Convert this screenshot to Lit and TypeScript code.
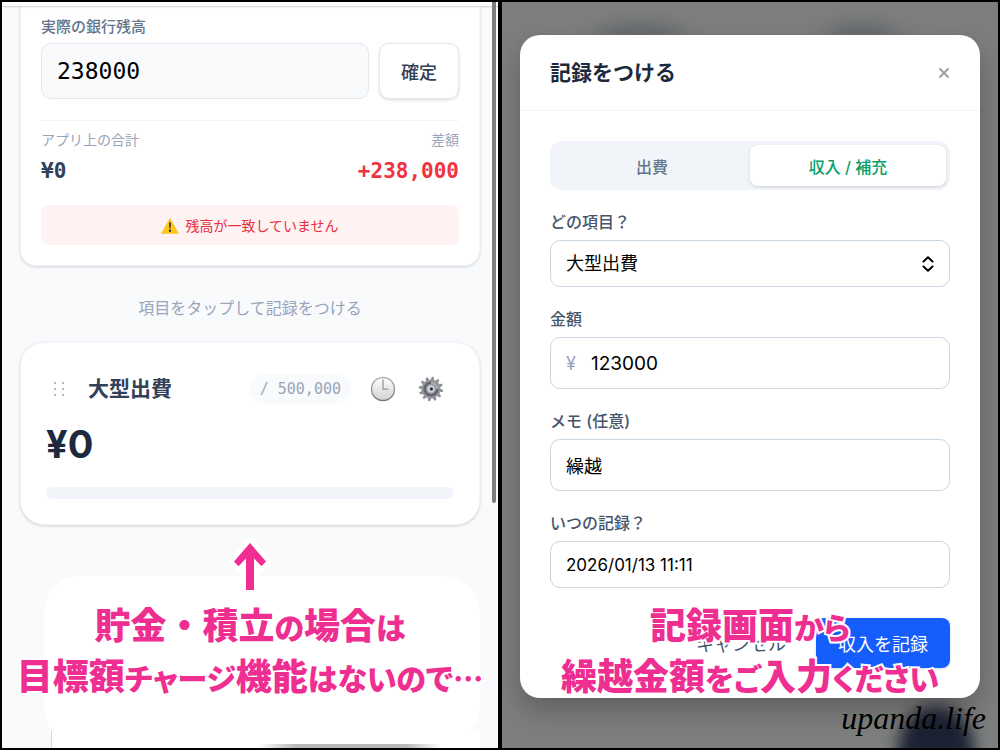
import { LitElement, html, css, svg } from "lit";
import { customElement } from "lit/decorators.js";

const fontStack = css`Inter, "Noto Sans CJK JP", sans-serif`;

const gearTeeth = Array.from({ length: 12 }, (_, i) => i * 30);

@customElement("balance-panel")
export class BalancePanel extends LitElement {
  static styles = css`
    :host {
      display: block;
      position: relative;
      overflow: hidden;
      background: #f8fafc;
      font-family: ${fontStack};
      color: #314158;
    }
    * { box-sizing: border-box; }
    button { font: inherit; color: inherit; cursor: pointer; padding: 0; border: 0; background: none; }
    .strip { height: 4px; background: #fff; box-shadow: 0 1px 2px #0000002e; position: relative; }
    .page { padding: 0 18px; }
    .card {
      background: #fff;
      border: 1px solid #f1f5f9;
      box-shadow: 0 1px 3px #0000002b;
    }
    .balance { padding: 11px 20px 20px; border-top: 0; border-radius: 0 0 16px 16px; }
    .label { display: block; font-size: 15px; line-height: 20px; font-weight: 500; color: #64748b; }
    .entry { display: flex; gap: 10px; margin-top: 6px; }
    .mono { font-family: "DejaVu Sans Mono", "Liberation Mono", monospace; }
    .entry input {
      flex: 1;
      min-width: 0;
      height: 56px;
      padding: 0 15px;
      border: 1px solid #e2e8f0;
      border-radius: 10px;
      background: #f8fafc;
      color: #000;
      font-size: 23px;
    }
    .confirm {
      width: 80px;
      height: 56px;
      border: 1px solid #e2e8f0;
      border-radius: 10px;
      background: #fff;
      box-shadow: 0 1px 3px #00000026;
      font-size: 18px;
      font-weight: 500;
    }
    .totals {
      display: flex;
      justify-content: space-between;
      margin: 21px 0 0;
      padding-top: 9px;
      border-top: 1px solid #f1f5f9;
    }
    .totals dt { font-size: 14px; line-height: 20px; color: #99a4b9; }
    .totals dd { margin: 9px 0 0; font-size: 21px; line-height: 24px; font-weight: 700; }
    .diff { text-align: right; }
    .diff dd { color: #ef3340; }
    .alert {
      display: flex;
      align-items: center;
      justify-content: center;
      gap: 6px;
      min-height: 40px;
      margin: 22px 0 0;
      border-radius: 8px;
      background: #fef2f2;
      color: #e7303c;
      font-size: 14px;
    }
    .hint { margin: 30px 0 22px; font-size: 16px; line-height: 24px; text-align: center; color: #99a4bd; }
    .item { padding: 31px 25px 25px; border-radius: 24px; }
    .head { display: flex; align-items: center; gap: 16px; padding-right: 7px; }
    .grip { display: grid; place-items: center; width: 26px; height: 30px; cursor: grab; }
    h2 { flex: 1; margin: 0; font-size: 21px; line-height: 26px; font-weight: 700; white-space: nowrap; }
    .pill {
      padding: 0 10px;
      border-radius: 15px;
      background: #f8fafc;
      color: #9aa6b8;
      font-size: 15px;
      line-height: 30px;
      white-space: pre;
    }
    .tool { display: grid; place-items: center; width: 32px; height: 30px; }
    .amount { margin: 20px 0 23px; font-size: 38px; line-height: 40px; font-weight: 700; color: #1d293d; }
    .bar { height: 12px; border-radius: 6px; background: #f1f5f9; }
    .peek {
      position: absolute;
      left: 49px;
      right: 18px;
      bottom: 0;
      height: 17px;
      border-left: 1px solid #d4d8dc;
      background: #fff;
    }
    .peek-edge {
      position: absolute;
      left: 256px;
      right: 56px;
      bottom: 0;
      height: 4px;
      background: linear-gradient(90deg, #fff, #b9b9b9 20%, #b9b9b9 80%, #fff);
    }
    .mask {
      position: absolute;
      left: 42px;
      right: 18px;
      bottom: 5px;
      height: 167px;
      border-radius: 36px;
      background: #fff;
    }
    .scroll {
      position: absolute;
      top: 0;
      right: 2px;
      width: 4px;
      height: 501px;
      border-radius: 0 0 2px 2px;
      background: #7c7d7e;
    }
    .arrow { position: absolute; left: 50%; bottom: 152px; margin-left: -24px; }
  `;

  render() {
    return html`
      <div class="strip"></div>
      <div class="page">
        <section class="card balance">
          <label class="label" for="bank">実際の銀行残高</label>
          <div class="entry">
            <input id="bank" class="mono" inputmode="numeric" value="238000" />
            <button class="confirm">確定</button>
          </div>
          <dl class="totals">
            <div><dt>アプリ上の合計</dt><dd class="mono">¥0</dd></div>
            <div class="diff"><dt>差額</dt><dd class="mono">+238,000</dd></div>
          </dl>
          <p class="alert" role="status">
            <svg width="18" height="17" viewBox="0 0 18 17" aria-hidden="true">
              <path d="M9 .8 17.6 16a.6.6 0 0 1-.5.8H.9a.6.6 0 0 1-.5-.8Z" fill="#fcc61b" />
              <path d="M8 5.4h2l-.4 6H8.4Z" fill="#35322c" />
              <circle cx="9" cy="13.8" r="1.2" fill="#35322c" />
            </svg>
            <span>残高が一致していません</span>
          </p>
        </section>
        <p class="hint">項目をタップして記録をつける</p>
        <section class="card item">
          <div class="head">
            <button class="grip" aria-label="並べ替え">
              <svg width="12" height="16" viewBox="0 0 12 16" fill="#8e9299">
                ${[2, 8, 14].map((y) => svg`<circle cx="2" cy=${y} r="0.9" /><circle cx="10" cy=${y} r="0.9" />`)}
              </svg>
            </button>
            <h2>大型出費</h2>
            <span class="pill mono">/ 500,000</span>
            <button class="tool" aria-label="履歴">
              <svg width="26" height="26" viewBox="0 0 26 26">
                <defs>
                  <linearGradient id="rim" x1="0" y1="0" x2="0" y2="1">
                    <stop offset="0" stop-color="#b4b4b4" /><stop offset="1" stop-color="#777" />
                  </linearGradient>
                  <linearGradient id="face" x1="0" y1="0" x2="0" y2="1">
                    <stop offset="0" stop-color="#fdfdfd" /><stop offset="1" stop-color="#d2d2d2" />
                  </linearGradient>
                </defs>
                <circle cx="13" cy="13" r="12.2" fill="url(#rim)" />
                <circle cx="13" cy="13" r="10.8" fill="url(#face)" />
                <path d="M13 3.500v9.700h5.500" fill="none" stroke="#999" stroke-width="1.300" />
              </svg>
            </button>
            <button class="tool" aria-label="設定">
              <svg width="26" height="26" viewBox="0 0 26 26">
                ${gearTeeth.map((a) => svg`<path d="M11.300 4 12.300.8h1.800l.7 3.200Z" fill="#8b8d92" transform="rotate(${a + 8} 13 13)" />`)}
                <circle cx="13" cy="13" r="9.6" fill="#95979c" />
                <circle cx="13" cy="13" r="7.6" fill="#63666c" />
                <path d="M13 5.400a7.600 7.600 0 0 1 7.600 7.600h-3A4.600 4.600 0 0 0 13 8.400Z" fill="#a9abb0" />
                <circle cx="13" cy="13" r="5" fill="#9ea1a8" />
                <circle cx="13" cy="13" r="3.4" fill="#d5d9e2" />
                <circle cx="13.4" cy="13" r="1.7" fill="#32353c" />
              </svg>
            </button>
          </div>
          <p class="amount">¥0</p>
          <div class="bar"></div>
        </section>
      </div>
      <div class="peek"></div>
      <div class="peek-edge"></div>
      <div class="mask"></div>
      <div class="scroll"></div>
      <svg class="arrow" width="48" height="60" viewBox="0 0 48 60" aria-hidden="true">
        <path d="M24 7 40 25.500 35.500 30.200 28 22.500V54H20V22.500L12.500 30.200 8 25.500Z"
          fill="#f02d92" stroke="#fff" stroke-width="10" stroke-linejoin="round" paint-order="stroke" />
      </svg>
      <caption-note .lines=${[
        [["wide", "貯金・積立"], ["kana", "の"], ["wide", "場合"], ["kana", "は"]],
        [["wide", "目標額"], ["kana", "チャージ"], ["wide", "機能"], ["kana", "はないので…"]],
      ]}></caption-note>
    `;
  }
}

type Run = [kind: "wide" | "kana", text: string];

@customElement("caption-note")
export class CaptionNote extends LitElement {
  static properties = { lines: { attribute: false } };

  declare lines: Run[][];

  constructor() {
    super();
    this.lines = [];
  }

  static styles = css`
    :host {
      position: absolute;
      left: 0;
      right: 0;
      bottom: 48px;
      text-align: center;
      font-family: "Noto Sans CJK JP", sans-serif;
      font-weight: 900;
      color: #ee2e91;
      pointer-events: none;
    }
    .line {
      margin: 0;
      font-size: 36px;
      line-height: 51px;
      white-space: nowrap;
      -webkit-text-stroke: 4px #fff;
      paint-order: stroke fill;
    }
    .wide { font-feature-settings: normal; }
    .kana { font-size: 30px; line-height: 1; font-feature-settings: "palt"; }
  `;

  render() {
    return this.lines.map(
      (runs) => html`<p class="line">${runs.map(([kind, text]) => html`<span class=${kind}>${text}</span>`)}</p>`
    );
  }
}

@customElement("record-panel")
export class RecordPanel extends LitElement {
  static styles = css`
    :host {
      display: block;
      position: relative;
      overflow: hidden;
      background: #7d7e7e;
      font-family: ${fontStack};
      color: #45556c;
    }
    * { box-sizing: border-box; }
    button { font: inherit; color: inherit; cursor: pointer; padding: 0; border: 0; background: none; }
    .smudge { position: absolute; border-radius: 50%; filter: blur(8px); background: #686b6e; }
    .s1 { top: 20px; left: 94px; width: 88px; height: 24px; }
    .s2 { top: 20px; right: 100px; width: 72px; height: 24px; }
    .s3 { bottom: -44px; right: 24px; width: 76px; height: 86px; background: #1c2233; }
    .modal {
      position: relative;
      margin: 33px 18px 50px;
      border-radius: 20px;
      background: #fff;
      box-shadow: 0 12px 28px #00000040;
    }
    header {
      display: flex;
      align-items: center;
      justify-content: space-between;
      height: 76px;
      padding: 0 30px;
      border-bottom: 1px solid #f1f5f9;
    }
    h1 { margin: 0; font-size: 21px; line-height: 30px; font-weight: 700; color: #1d293d; }
    .close { display: grid; place-items: center; width: 12px; height: 24px; }
    form { display: grid; gap: 20px; padding: 30px; }
    .tabs {
      display: grid;
      grid-template-columns: 1fr 1fr;
      padding: 4px;
      border-radius: 12px;
      background: #f1f5f9;
    }
    .tab { height: 41px; border-radius: 8px; font-size: 16px; font-weight: 500; color: #64748b; }
    .tab.on { background: #fff; color: #0a9d66; box-shadow: 0 1px 3px #00000026; }
    .field { display: grid; gap: 6px; }
    label { font-size: 16px; line-height: 24px; font-weight: 500; }
    .box {
      display: flex;
      align-items: center;
      gap: 15px;
      height: 47px;
      padding: 0 15px;
      border: 1px solid #cad5e2;
      border-radius: 10px;
      background: #fff;
    }
    .tall { height: 52px; }
    .box input, .box select {
      flex: 1;
      min-width: 0;
      height: 100%;
      margin: 0;
      padding: 0;
      border: 0;
      outline: 0;
      background: none;
      appearance: none;
      font-family: inherit;
      font-size: 18px;
      color: #000;
    }
    .yen { font-size: 18px; color: #99a4bd; }
    .box .num { font-size: 19px; }
    .box .date { font-size: 17px; }
    .actions { display: flex; justify-content: flex-end; gap: 8px; margin-top: 10px; font-size: 18px; }
    .actions button { height: 50px; padding: 0 22px; border-radius: 8px; }
    .actions .primary { background: #155dfc; color: #fff; box-shadow: 0 1px 3px #0000002b; }
    .brand {
      position: absolute;
      right: 12px;
      bottom: 10px;
      margin: 0;
      font-family: "Liberation Serif", serif;
      font-style: italic;
      font-size: 32px;
      line-height: 40px;
      color: #000;
    }
  `;

  render() {
    return html`
      <div class="smudge s1"></div>
      <div class="smudge s2"></div>
      <div class="smudge s3"></div>
      <section class="modal" role="dialog" aria-labelledby="title">
        <header>
          <h1 id="title">記録をつける</h1>
          <button class="close" aria-label="閉じる">
            <svg width="12" height="12" viewBox="0 0 12 12"><path d="m1.500 1.500 9 9m0-9-9 9" stroke="#999ca3" stroke-width="1.800" /></svg>
          </button>
        </header>
        <form @submit=${(e: Event) => e.preventDefault()}>
          <div class="tabs">
            <button type="button" class="tab">出費</button>
            <button type="button" class="tab on">収入 / 補充</button>
          </div>
          <div class="field">
            <label for="item">どの項目？</label>
            <div class="box">
              <select id="item"><option>大型出費</option></select>
              <svg width="12" height="16" viewBox="0 0 12 16" fill="none" stroke="#000" stroke-width="2"
                stroke-linecap="round" stroke-linejoin="round" aria-hidden="true">
                <path d="M1.500 5.500 6 1.300l4.500 4.200M1.500 10.500 6 14.700l4.500-4.200" />
              </svg>
            </div>
          </div>
          <div class="field">
            <label for="amount">金額</label>
            <div class="box tall">
              <span class="yen">¥</span>
              <input id="amount" class="num" inputmode="numeric" value="123000" />
            </div>
          </div>
          <div class="field">
            <label for="memo">メモ (任意)</label>
            <div class="box tall"><input id="memo" value="繰越" /></div>
          </div>
          <div class="field">
            <label for="when">いつの記録？</label>
            <div class="box"><input id="when" class="date" value="2026/01/13 11:11" /></div>
          </div>
          <div class="actions">
            <button type="button">キャンセル</button>
            <button class="primary">収入を記録</button>
          </div>
        </form>
      </section>
      <p class="brand">upanda.life</p>
      <caption-note .lines=${[
        [["wide", "記録画面"], ["kana", "から"]],
        [["wide", "繰越金額"], ["kana", "をご"], ["wide", "入力"], ["kana", "ください"]],
      ]}></caption-note>
    `;
  }
}

@customElement("app-root")
export class AppRoot extends LitElement {
  static styles = css`
    :host {
      display: grid;
      grid-template-columns: 1fr 1fr;
      gap: 4px;
      box-sizing: border-box;
      min-height: 100vh;
      padding: 2px;
      background: #000;
    }
  `;

  render() {
    return html`<balance-panel></balance-panel><record-panel></record-panel>`;
  }
}
